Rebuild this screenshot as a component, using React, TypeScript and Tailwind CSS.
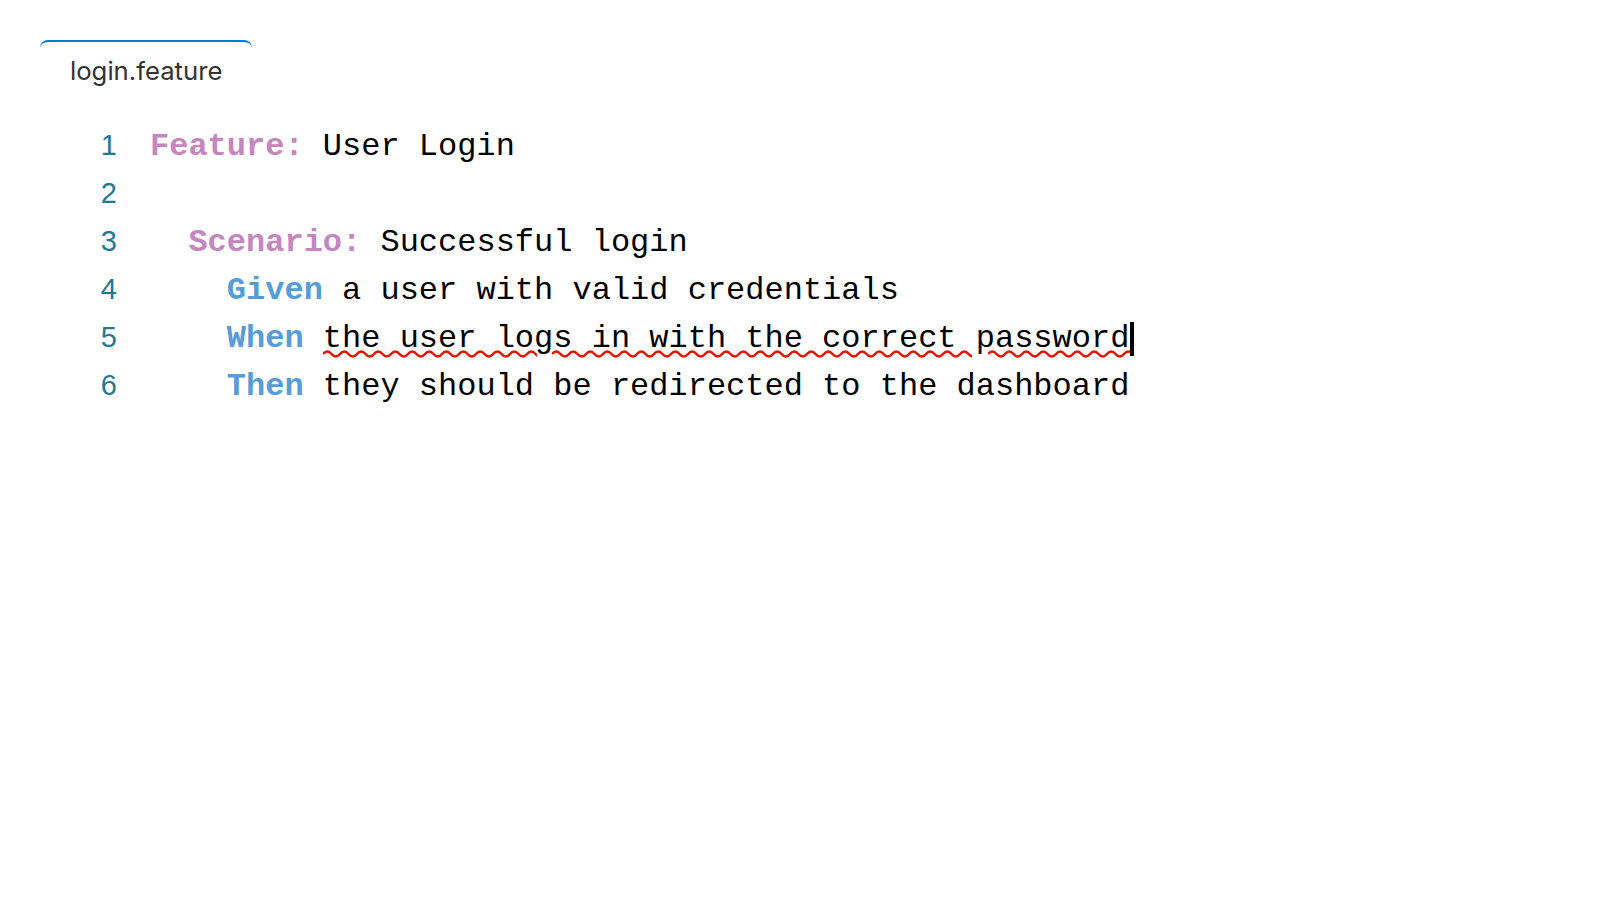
import React from "react";

function Squiggle({ width, className }: { width: number; className: string }) {
  const period = 17;
  const n = Math.ceil(width / period);
  let d = "M0,5";
  for (let i = 0; i < n; i++) {
    d += ` q${period / 4},-5 ${period / 2},0 q${period / 4},5 ${period / 2},0`;
  }
  return (
    <svg
      className={className}
      width={width}
      height={10}
      viewBox={`0 0 ${width} 10`}
      style={{ overflow: "hidden" }}
    >
      <path d={d} fill="none" stroke="#e51400" strokeWidth={2.5} />
    </svg>
  );
}

const KP = "text-[#c586c0] font-bold";
const KB = "text-[#569cd6] font-bold";

export default function App() {
  return (
    <div className="min-h-screen w-full bg-white">
      <div className="pl-[40px] pt-[40px]">
        <div className="flex h-[60px] w-[212px] items-center rounded-t-[8px] border-t-2 border-[#0078d4] pl-[30px]">
          <span className="text-[25.7px] text-[#333333] [font-family:Inter,'Liberation_Sans',sans-serif]">
            login.feature
          </span>
        </div>
      </div>
      <div className="pt-[23px] [font-family:'Liberation_Mono',monospace] text-[32px] text-black">
        {[
          <>
            <span className={KP}>Feature:</span> User Login
          </>,
          <></>,
          <>
            {"  "}
            <span className={KP}>Scenario:</span> Successful login
          </>,
          <>
            {"    "}
            <span className={KB}>Given</span> a user with valid credentials
          </>,
          <>
            {"    "}
            <span className={KB}>When</span> the user logs in with the correct password
            <span className="ml-[1px] inline-block h-[34px] w-[4px] bg-black align-middle" />
          </>,
          <>
            {"    "}
            <span className={KB}>Then</span> they should be redirected to the dashboard
          </>,
        ].map((content, i) => (
          <div key={i} className="flex h-[48px] items-center">
            <div className="w-[117px] pb-[4px] text-right text-[29px] leading-[44px] text-[#237893] [font-family:'Liberation_Sans',Arial,sans-serif]">
              {i + 1}
            </div>
            <div className="relative ml-[33px] h-[48px] whitespace-pre leading-[48px]">
              {content}
              {i === 4 && (
                <>
                  <Squiggle width={214} className="absolute left-[173px] top-[34px]" />
                  <Squiggle width={420} className="absolute left-[402px] top-[34px]" />
                  <Squiggle width={142} className="absolute left-[838px] top-[34px]" />
                </>
              )}
            </div>
          </div>
        ))}
      </div>
    </div>
  );
}
